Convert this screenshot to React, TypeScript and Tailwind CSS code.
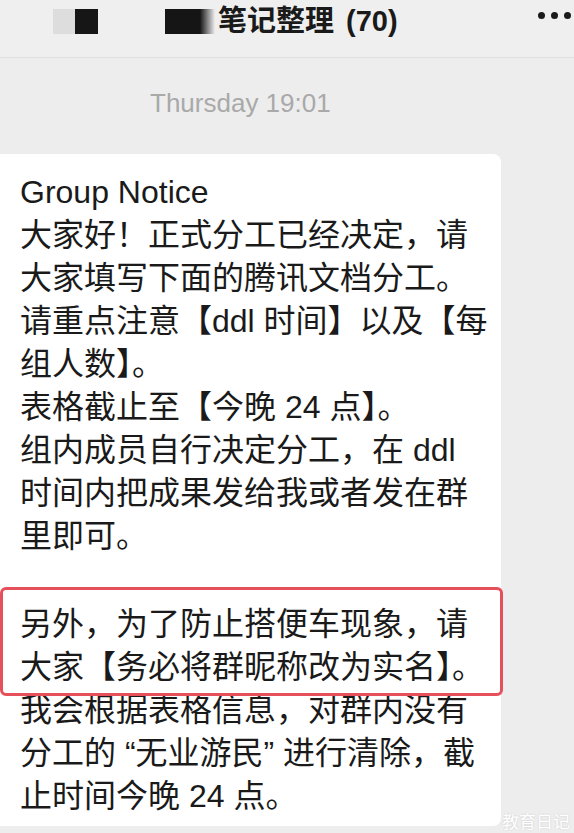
import React from "react";

const body = '"Liberation Sans", "Noto Sans CJK SC", sans-serif';
const cjk = '"Noto Sans CJK SC", sans-serif';

const firstPart = [
  "大家好！正式分工已经决定，请",
  "大家填写下面的腾讯文档分工。",
  "请重点注意【ddl 时间】以及【每",
  "组人数】。",
  "表格截止至【今晚 24 点】。",
  "组内成员自行决定分工，在 ddl",
  "时间内把成果发给我或者发在群",
  "里即可。",
];

const Line = ({ children }: { children: React.ReactNode }) => (
  <div className="whitespace-nowrap">{children}</div>
);

export default function App() {
  return (
    <div className="w-[574px] h-[833px] overflow-hidden bg-[#ededed] relative" style={{ fontFamily: body }}>
      {/* Top bar */}
      <div className="h-[58px] bg-[#efefef] border-b border-[#e0e0e0] flex items-start">
        <div className="flex items-center pt-[9px] pl-[53px]">
          <div className="w-[22px] h-[25px] bg-[#dddddd]" />
          <div className="w-[23px] h-[25px] bg-[#161616]" />
        </div>
        <div className="flex items-start ml-[67px]">
          <div className="w-[50px] h-[25px] mt-[9px] bg-gradient-to-r from-[#151515] from-70% to-[#151515]/0" />
          <div
            className="ml-[3px] pt-[1px] text-[29px] leading-[34px] font-semibold text-[#1a1a1a] whitespace-nowrap"
            style={{ fontFamily: cjk }}
          >
            笔记整理
            <span className="ml-[12px]" style={{ fontFamily: '"Liberation Sans", sans-serif' }}>
              (70)
            </span>
          </div>
        </div>
        <div className="ml-auto flex items-center gap-[6px] pt-[12px] pr-[3px]">
          <div className="w-[7px] h-[7px] rounded-full bg-[#1a1a1a]" />
          <div className="w-[7px] h-[7px] rounded-full bg-[#1a1a1a]" />
          <div className="w-[7px] h-[7px] rounded-full bg-[#1a1a1a]" />
        </div>
      </div>

      {/* Timestamp */}
      <div className="mt-[30px] pl-[150px] text-[26px] leading-[30px] text-[#a9a9a9]">Thursday 19:01</div>

      {/* Bubble */}
      <div className="mt-[36px] w-[501px] bg-white rounded-r-[8px] pl-[20px] pt-[17px] pb-[8px] text-[32px] leading-[43px] text-[#1a1a1a]">
        <Line>Group Notice</Line>
        {firstPart.map((l) => (
          <Line key={l}>{l}</Line>
        ))}
        <div className="h-[45px]" />
        <div className="relative">
          <div className="absolute -left-[20px] -top-[16px] -bottom-[7px] w-[503px] border-[3px] border-[#e5505b] rounded-[6px]" />
          <Line>另外，为了防止搭便车现象，请</Line>
          <Line>大家【务必将群昵称改为实名】。</Line>
        </div>
        <Line>我会根据表格信息，对群内没有</Line>
        <Line>分工的 “无业游民” 进行清除，截</Line>
        <Line>止时间今晚 24 点。</Line>
      </div>

      {/* Watermark */}
      <div
        className="absolute right-[4px] bottom-[1px] text-[17px] leading-[22px] text-white [text-shadow:0_0_2px_rgba(0,0,0,0.15)]"
        style={{ fontFamily: cjk }}
      >
        教育日记
      </div>
    </div>
  );
}
